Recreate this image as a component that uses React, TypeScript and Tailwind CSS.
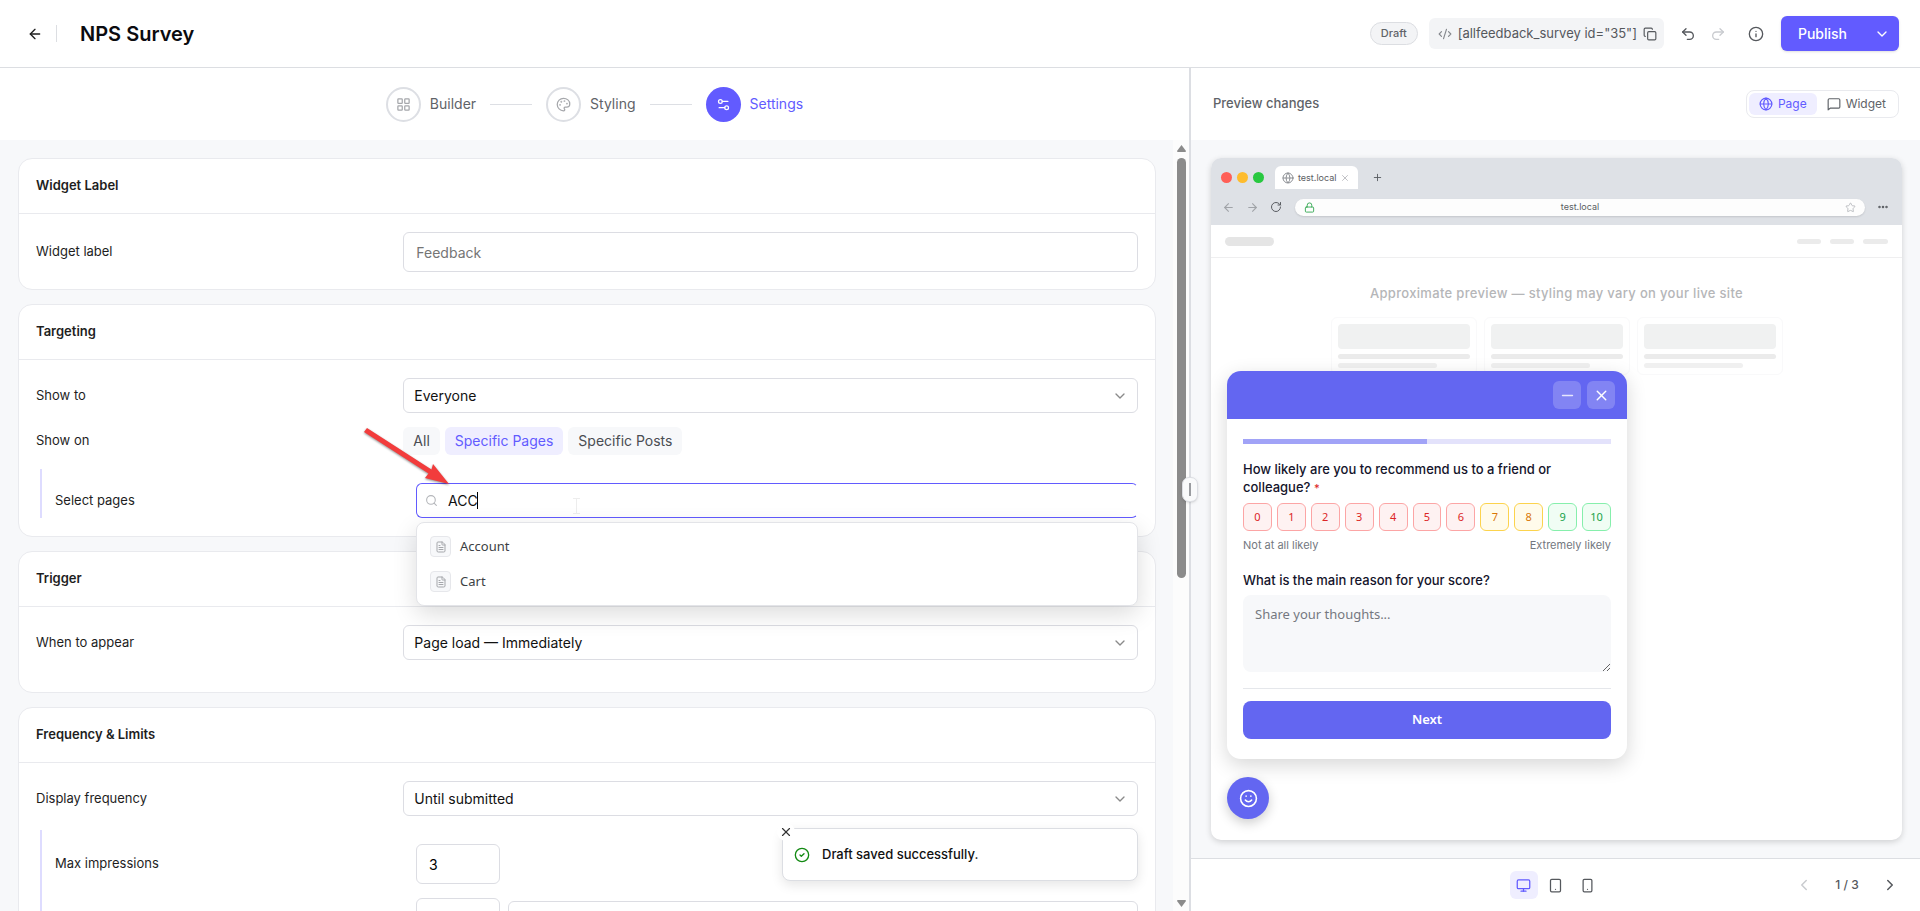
import type { ReactNode } from "react";
import {
  ArrowLeft, ArrowRight, ChevronDown, ChevronLeft, ChevronRight, CircleCheck, CodeXml, Copy, Ellipsis, FileText, Globe, Info,
  LayoutGrid, Lock, Minus, Monitor, Palette, Plus, Redo2, RotateCw, Search, Settings2, Smartphone, Smile, Star, Tablet, Undo2, X,
} from "lucide-react";

function Card({ title, children, className = "pb-[18px]" }: { title: string; children: ReactNode; className?: string }) {
  return (
    <section className="shrink-0 rounded-[14px] border border-[#e9eaee] bg-white">
      <h2 className="flex h-[55px] items-center border-b border-[#e9eaee] px-[17px] text-[13px] font-semibold text-[#1e1e1e]">{title}</h2>
      <div className={`flex flex-col gap-3.5 px-[17px] pt-[18px] ${className}`}>{children}</div>
    </section>
  );
}

function Row({ label, htmlFor, children }: { label: string; htmlFor?: string; children: ReactNode }) {
  return (
    <div className="flex items-center">
      <label htmlFor={htmlFor} className="w-1/3 shrink-0 text-[13px] text-[#1e1e1e]">{label}</label>
      <div className="flex min-w-0 flex-1 items-center gap-2">{children}</div>
    </div>
  );
}

function SelectBox({ id, options, label }: { id: string; options: string[]; label?: string }) {
  return (
    <div className="relative w-full">
      <select id={id} aria-label={label} className="h-[35px] w-full appearance-none rounded-md border border-[#dcdde3] bg-white px-2.5 text-sm text-[#111]">
        {options.map((o) => <option key={o}>{o}</option>)}
      </select>
      <ChevronDown className="pointer-events-none absolute top-2.5 right-2.5 size-4 text-[#8a8a8a]" />
    </div>
  );
}

function Nested({ children }: { children: ReactNode }) {
  return <div className="ml-1 flex flex-col gap-3.5 border-l-2 border-[#dedcff] pt-3.5 pl-[13px]">{children}</div>;
}

function Step({ icon, label, active }: { icon: ReactNode; label: string; active?: boolean }) {
  return (
    <button className={`flex items-center gap-[9px] text-sm ${active ? "text-[#625bff]" : "text-[#5f6368]"}`}>
      <span className={`flex size-[35px] items-center justify-center rounded-full ${active ? "bg-[#625bff] text-white" : "border-2 border-[#dddfe4] text-[#a5a7ab]"}`}>{icon}</span>
      {label}
    </button>
  );
}

function MessageIcon() {
  return (
    <svg className="size-3.5" viewBox="0 0 24 24" fill="none" stroke="currentColor" strokeWidth={2} strokeLinecap="round" strokeLinejoin="round">
      <path d="M22 17a2 2 0 0 1-2 2H6l-4 3V5a2 2 0 0 1 2-2h16a2 2 0 0 1 2 2z" />
    </svg>
  );
}

function TopBar() {
  return (
    <header className="flex h-[68px] shrink-0 items-center border-b border-[#dcdee2] bg-white pr-[21px] pl-[27px]">
      <button aria-label="Back" className="text-[#1e1e1e]"><ArrowLeft className="size-4" /></button>
      <span className="ml-[13px] h-[17px] w-px bg-[#dcdee2]" />
      <h1 className="ml-[23px] text-xl font-semibold text-[#0b0b0f]">NPS Survey</h1>
      <div className="ml-auto flex items-center">
        <span className="flex h-[23px] items-center rounded-full border border-[#dcdee2] bg-[#f3f4f6] px-2.5 text-[11px] font-medium text-[#5f6368]">Draft</span>
        <div className="ml-[11px] flex h-[31px] items-center gap-1.5 rounded-md bg-[#f3f4f6] pr-[7px] pl-[9px] text-[13px] text-[#55585d]">
          <CodeXml className="size-3.5 text-[#85888d]" />
          <span>[allfeedback_survey id="35"]</span>
          <button aria-label="Copy shortcode"><Copy className="size-3.5" /></button>
        </div>
        <button aria-label="Undo" className="ml-4 text-[#55585d]"><Undo2 className="size-4" /></button>
        <button aria-label="Redo" className="ml-3.5 text-[#c9cbcf]"><Redo2 className="size-4" /></button>
        <button aria-label="Info" className="ml-[22px] text-[#55585d]"><Info className="size-4" /></button>
        <div className="ml-[17px] flex h-[35px] items-center rounded-md bg-[#625bff] text-white shadow-sm">
          <button className="h-full pl-[17px] text-sm font-medium">Publish</button>
          <button aria-label="Publish options" className="flex h-full items-center pr-[9px] pl-[27px]"><ChevronDown className="size-4" /></button>
        </div>
      </div>
    </header>
  );
}

const pages = ["Account", "Cart"];

function PageSearch() {
  return (
    <div className="relative w-full">
      <input id="pages" type="text" defaultValue="ACC" className="h-[35px] w-full rounded-md border border-[#625bff] border-r-transparent bg-white pl-[31px] text-sm text-[#111] outline-none" />
      <Search className="absolute top-[11px] left-[9px] size-[13px] text-[#b4b6ba]" />
      <span className="absolute top-[9px] left-[61px] h-[17px] w-px bg-black" />
      <svg className="absolute top-[15px] left-[157px] h-4 w-[7px] text-[#ededed]" viewBox="0 0 7 16" fill="none" stroke="currentColor">
        <path d="M0 .5h7M3.5.5v15M0 15.5h7" />
      </svg>
      <ul className="absolute top-[39px] right-0 left-0 z-10 rounded-lg border border-[#e3e4e8] bg-white px-1.5 py-1.5 shadow-[0_8px_24px_rgba(0,0,0,0.14)]">
        {pages.map((p) => (
          <li key={p}>
            <button className="flex h-[35px] w-full items-center gap-[9px] px-[7px] font-['Noto_Sans',sans-serif] text-[13px] text-[#3c3f44]">
              <span className="flex size-[21px] items-center justify-center rounded border border-[#e6e7eb] bg-[#f7f8fa] text-[#a5a7ab]"><FileText className="size-3" /></span>
              {p}
            </button>
          </li>
        ))}
      </ul>
      <svg className="pointer-events-none absolute -top-[57px] -left-[54px] h-[60px] w-[90px] drop-shadow-[0_1px_1px_rgba(0,0,0,0.45)]" viewBox="0 0 90 60">
        <path d="M5 2 69.500 43.500 71 38 87 58 63 52 66.500 47.500 2 6Z" fill="#f23c3c" />
      </svg>
    </div>
  );
}

function Toast() {
  return (
    <div role="status" className="absolute right-[51px] bottom-[30px] z-20 flex h-[53px] w-[356px] items-center gap-3 rounded-lg border border-[#dcdee3] bg-white pl-[11px] text-[13px] font-medium text-[#111] shadow-[0_4px_12px_rgba(0,0,0,0.1)]">
      <CircleCheck className="size-4 text-[#138a13]" />
      Draft saved successfully.
      <button aria-label="Close" className="absolute -top-1.5 -left-1.5 flex size-[18px] items-center justify-center rounded-full bg-white text-[#333]"><X className="size-3.5" /></button>
    </div>
  );
}

function SettingsPanel() {
  return (
    <div className="relative flex min-w-0 flex-[1189_1_0%] flex-col">
      <nav className="flex h-[72px] shrink-0 items-center justify-center gap-3.5 bg-white">
        <Step icon={<LayoutGrid className="size-[15px]" />} label="Builder" />
        <span className="h-px w-[42px] bg-[#dddfe4]" />
        <Step icon={<Palette className="size-[15px]" />} label="Styling" />
        <span className="h-px w-[42px] bg-[#dddfe4]" />
        <Step icon={<Settings2 className="size-[15px]" />} label="Settings" active />
      </nav>
      <div className="flex min-h-0 flex-1 bg-[#f7f8fa]">
        <div className="flex min-w-0 flex-1 flex-col gap-3.5 overflow-hidden pt-[18px] pr-[17px] pl-[18px]">
          <Card title="Widget Label" className="pb-[17px]">
            <Row label="Widget label" htmlFor="label">
              <input id="label" type="text" placeholder="Feedback" className="h-10 w-full rounded-md border border-[#dcdde3] px-3 text-sm placeholder:text-[#757575]" />
            </Row>
          </Card>
          <Card title="Targeting">
            <Row label="Show to" htmlFor="show-to"><SelectBox id="show-to" options={["Everyone", "Logged in users"]} /></Row>
            <Row label="Show on">
              <div className="flex gap-[5px] text-sm text-[#4a4d52]">
                <button className="h-7 rounded-md bg-[#f7f8fa] px-2.5">All</button>
                <button className="h-7 rounded-md bg-[#efeeff] px-2.5 text-[#625bff]">Specific Pages</button>
                <button className="h-7 rounded-md bg-[#f7f8fa] px-2.5">Specific Posts</button>
              </div>
            </Row>
            <Nested>
              <Row label="Select pages" htmlFor="pages"><PageSearch /></Row>
            </Nested>
          </Card>
          <Card title="Trigger" className="pb-8">
            <Row label="When to appear" htmlFor="when"><SelectBox id="when" options={["Page load — Immediately", "Page load — Delayed"]} /></Row>
          </Card>
          <Card title="Frequency & Limits">
            <Row label="Display frequency" htmlFor="freq"><SelectBox id="freq" options={["Until submitted", "Always"]} /></Row>
            <Nested>
              <Row label="Max impressions" htmlFor="max"><input id="max" type="text" defaultValue="3" className="h-10 w-[84px] rounded-md border border-[#dcdde3] px-3 text-sm" /></Row>
              <div className="flex items-center">
                <div className="w-1/3 shrink-0" />
                <div className="flex min-w-0 flex-1 items-center gap-2">
                  <input type="text" aria-label="Interval" className="h-10 w-[84px] shrink-0 rounded-md border border-[#dcdde3] px-3 text-sm" />
                  <SelectBox id="interval-unit" label="Interval unit" options={[""]} />
                </div>
              </div>
            </Nested>
          </Card>
        </div>
        <div className="flex w-4 flex-col items-center bg-[#fcfcfc] pt-[5px] pb-1">
          <svg className="h-[7px] w-[9px] text-[#8b8b8b]" viewBox="0 0 9 7"><path d="M4.500 0 9 6 8.500 7H.5L0 6Z" fill="currentColor" /></svg>
          <div className="mt-1.5 h-[420px] w-[9px] rounded-full bg-[#8b8b8b]" />
          <svg className="mt-auto h-[7px] w-[9px] text-[#8b8b8b]" viewBox="0 0 9 7"><path d="M4.500 7 9 1 8.500 0H.5L0 1Z" fill="currentColor" /></svg>
        </div>
      </div>
      <Toast />
    </div>
  );
}

function BrowserChrome() {
  return (
    <div className="h-[67px] shrink-0 bg-[#dee1e6] text-[9px] text-[#5a5d62]">
      <div className="flex h-[31px] items-end">
        <div className="flex h-[23px] items-center gap-[5px] px-2.5">
          <span className="size-[11px] rounded-full bg-[#ff5f57]" />
          <span className="size-[11px] rounded-full bg-[#febc2e]" />
          <span className="size-[11px] rounded-full bg-[#28c840]" />
        </div>
        <div className="ml-px flex h-[23px] w-[83px] items-center rounded-t-md bg-white pl-[7px]">
          <Globe className="size-3 text-[#8b8e93]" />
          <span className="ml-1">test.local</span>
          <X className="ml-1 size-2.5 text-[#b4b6ba]" />
        </div>
        <div className="flex h-[23px] items-center pl-3.5"><Plus className="size-[11px]" /></div>
      </div>
      <div className="flex h-9 items-center pr-[13px] pl-[11px]">
        <ArrowLeft className="size-[13px] text-[#a0a3a8]" />
        <ArrowRight className="ml-[11px] size-[13px] text-[#a0a3a8]" />
        <RotateCw className="ml-[11px] size-3 text-[#5a5d62]" />
        <div className="ml-[13px] flex h-[17px] flex-1 items-center justify-between rounded-full bg-[#fdfdfd] px-[9px] shadow-[0_1px_2px_rgba(0,0,0,0.12)]">
          <Lock className="size-[11px] text-[#34a853]" />
          <span>test.local</span>
          <Star className="size-[11px] text-[#b9bbc0]" />
        </div>
        <Ellipsis className="ml-3 size-3" strokeWidth={3} />
      </div>
    </div>
  );
}

const toneClasses = {
  red: "border-[#fca5a5] bg-[#fef2f2] text-[#dc2626]",
  amber: "border-[#fcd34d] bg-[#fffbeb] text-[#d97706]",
  green: "border-[#86efac] bg-[#f0fdf4] text-[#16a34a]",
};

function tone(score: number) {
  if (score <= 6) return toneClasses.red;
  return score <= 8 ? toneClasses.amber : toneClasses.green;
}

function SurveyWidget() {
  return (
    <div className="absolute bottom-[81px] left-4 w-[400px] overflow-hidden rounded-[14px] bg-white text-[#14142b] shadow-[0_6px_20px_rgba(0,0,0,0.16)]">
      <div className="flex h-12 items-center justify-end gap-1.5 bg-[#6366f1] px-3 text-white">
        <button aria-label="Minimize" className="flex size-7 items-center justify-center rounded-md bg-white/20 text-white/80"><Minus className="size-[17px]" /></button>
        <button aria-label="Close" className="flex size-7 items-center justify-center rounded-md bg-white/20"><X className="size-[17px]" /></button>
      </div>
      <div className="px-4 pt-5 pb-5">
        <div className="h-[5px] bg-[#e3e2fb]"><div className="h-full w-1/2 bg-[#a1a3f7]" /></div>
        <p className="mt-4 text-[13px] leading-[18px] font-medium">
          How likely are you to recommend us to a friend or colleague? <span className="text-[11px] text-[#dc2626]">*</span>
        </p>
        <div className="mt-1.5 flex gap-[5px]">
          {Array.from({ length: 11 }, (_, i) => (
            <button key={i} className={`h-7 flex-1 rounded-md border font-['Noto_Sans',sans-serif] text-[11px] ${tone(i)}`}>{i}</button>
          ))}
        </div>
        <div className="mt-1.5 flex justify-between text-[11px] leading-4 text-[#737780]">
          <span>Not at all likely</span>
          <span>Extremely likely</span>
        </div>
        <label htmlFor="reason" className="mt-[18px] block text-[13px] leading-[18px] font-medium">What is the main reason for your score?</label>
        <textarea id="reason" placeholder="Share your thoughts..." className="mt-1.5 block h-[77px] w-full rounded-lg bg-[#f7f8fa] px-3 py-2.5 font-['Noto_Sans',sans-serif] text-[13px] placeholder:text-[#757880]" />
        <div className="mt-4 border-t border-[#e5e7eb] pt-3">
          <button className="h-[38px] w-full rounded-lg bg-[#6366f1] font-['Noto_Sans',sans-serif] text-[13px] font-semibold text-white">Next</button>
        </div>
      </div>
    </div>
  );
}

function SkeletonCard() {
  return (
    <div className="flex h-[58px] w-[146px] flex-col rounded-md border border-[#f9f9fa] p-1.5">
      <div className="h-[25px] rounded bg-[#f0f1f1]" />
      <div className="mt-[5px] h-[5px] rounded-full bg-[#ebebeb]" />
      <div className="mt-1 h-[5px] w-3/4 rounded-full bg-[#f0f0f0]" />
    </div>
  );
}

function PreviewPanel() {
  return (
    <div className="flex min-w-0 flex-[729_1_0%] flex-col bg-[#f7f8fa]">
      <div className="flex h-[72px] shrink-0 items-center justify-between bg-white pr-[21px] pl-[22px]">
        <h2 className="text-[13px] font-medium text-[#5f6368]">Preview changes</h2>
        <div className="flex rounded-lg border border-[#e9eaee] p-0.5 text-xs text-[#5f6368]">
          <button className="flex h-[22px] items-center gap-[5px] rounded-md bg-[#efeeff] px-2.5 text-[#625bff]"><Globe className="size-3.5" />Page</button>
          <button className="flex h-[22px] items-center gap-[5px] rounded-md px-2.5"><MessageIcon />Widget</button>
        </div>
      </div>
      <div className="flex min-h-0 flex-1 flex-col p-[18px] pl-5">
        <div className="flex flex-1 flex-col overflow-hidden rounded-[10px] bg-white shadow-[0_2px_6px_rgba(0,0,0,0.16)]">
          <BrowserChrome />
          <div className="relative flex-1">
            <div className="flex h-[33px] items-center justify-between border-b border-[#efeff0] px-3.5">
              <span className="h-[9px] w-[49px] rounded-full bg-[#e5e5e5]" />
              <div className="flex gap-[9px]">
                <span className="h-[5px] w-6 rounded-full bg-[#ebebeb]" />
                <span className="h-[5px] w-6 rounded-full bg-[#ebebeb]" />
                <span className="h-[5px] w-[25px] rounded-full bg-[#ebebeb]" />
              </div>
            </div>
            <p className="pt-[25px] text-center text-[13px] leading-5 font-medium tracking-wide text-[#b5b6b8]">Approximate preview — styling may vary on your live site</p>
            <div className="mt-3.5 flex justify-center gap-[7px]">
              <SkeletonCard />
              <SkeletonCard />
              <SkeletonCard />
            </div>
            <SurveyWidget />
            <button aria-label="Open feedback" className="absolute bottom-[21px] left-4 flex size-[42px] items-center justify-center rounded-full bg-[#6366f1] text-white shadow-[0_4px_12px_rgba(0,0,0,0.2)]"><Smile className="size-[19px]" /></button>
          </div>
        </div>
      </div>
      <footer className="relative flex h-[53px] shrink-0 items-center justify-center gap-1 border-t border-[#dcdee2] bg-white text-[#55585d]">
        <button aria-label="Desktop" className="flex size-7 items-center justify-center rounded-md bg-[#efeeff] text-[#625bff]"><Monitor className="size-[15px]" /></button>
        <button aria-label="Tablet" className="flex size-7 items-center justify-center"><Tablet className="size-[15px]" /></button>
        <button aria-label="Phone" className="flex size-7 items-center justify-center"><Smartphone className="size-[15px]" /></button>
        <div className="absolute right-4 flex items-center text-xs font-medium">
          <button aria-label="Previous" className="flex size-7 items-center justify-center text-[#c9cbcf]"><ChevronLeft className="size-[18px]" /></button>
          <span className="w-[58px] text-center">1 / 3</span>
          <button aria-label="Next" className="flex size-7 items-center justify-center"><ChevronRight className="size-[18px]" /></button>
        </div>
      </footer>
    </div>
  );
}

export default function App() {
  return (
    <div className="flex h-screen flex-col overflow-hidden font-['Inter',sans-serif]">
      <TopBar />
      <main className="flex min-h-0 flex-1">
        <SettingsPanel />
        <div className="relative z-20 w-0.5 shrink-0 bg-[#dcdee3]">
          <button aria-label="Resize" className="absolute top-[409px] -left-[7px] flex h-[25px] w-4 items-center justify-center rounded-[7px] border border-[#dcdee3] bg-[#f9fafb] shadow-sm">
            <span className="h-[13px] w-0.5 bg-[#9a9ca0]" />
          </button>
        </div>
        <PreviewPanel />
      </main>
    </div>
  );
}
